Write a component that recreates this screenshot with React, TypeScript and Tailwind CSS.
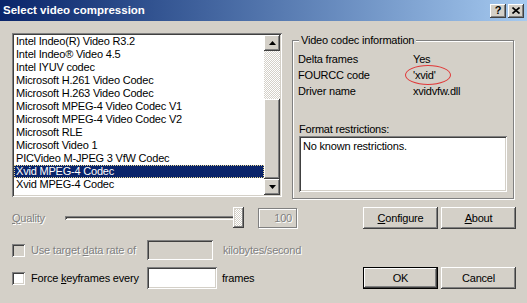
const codecs = [
  "Intel Indeo(R) Video R3.2",
  "Intel Indeo\u00AE Video 4.5",
  "Intel IYUV codec",
  "Microsoft H.261 Video Codec",
  "Microsoft H.263 Video Codec",
  "Microsoft MPEG-4 Video Codec V1",
  "Microsoft MPEG-4 Video Codec V2",
  "Microsoft RLE",
  "Microsoft Video 1",
  "PICVideo M-JPEG 3 VfW Codec",
  "Xvid MPEG-4 Codec",
  "Xvid MPEG-4 Codec",
];
const selected = 10;

const raised =
  "shadow-[inset_-1px_-1px_#404040,inset_1px_1px_#fff,inset_-2px_-2px_#808080,inset_2px_2px_#d4d0c8]";
const sunken =
  "shadow-[inset_1px_1px_#808080,inset_-1px_-1px_#fff,inset_2px_2px_#404040,inset_-2px_-2px_#d4d0c8]";
const dither =
  "bg-[repeating-conic-gradient(#fff_0%_25%,#d4d0c8_0%_50%)] bg-[length:2px_2px]";
const disabledText = "text-[#808080] [text-shadow:1px_1px_0_#fff]";

const Arrow = ({ down }: { down?: boolean }) => (
  <svg width="7" height="4" viewBox="0 0 7 4">
    <polygon points={down ? "0,0 7,0 3.5,4" : "3.5,0 7,4 0,4"} fill="#000" />
  </svg>
);

const Button = ({ children, primary }: { children: React.ReactNode; primary?: boolean }) => (
  <button
    className={`w-[75px] h-[22px] flex items-center justify-center bg-[#d4d0c8] ${
      primary ? "border border-black" : ""
    } ${raised}`}
  >
    {children}
  </button>
);

const CheckBox = ({ disabled }: { disabled?: boolean }) => (
  <div className={`w-[13px] h-[13px] shrink-0 ${disabled ? "bg-[#d4d0c8]" : "bg-white"} ${sunken}`} />
);

export default function App() {
  return (
    <div className="w-[527px] h-[303px] bg-[#d4d0c8] overflow-hidden font-['Liberation_Sans',Arial,sans-serif] text-[11px] leading-[13px] text-black tracking-[-0.2px]">
      {/* title bar */}
      <div className="h-[21px] flex items-center bg-linear-to-r from-[#0a246a] to-[#a6caf0] pl-[3px] pr-[3px]">
        <span className="text-white font-bold text-[11.5px] tracking-normal">Select video compression</span>
        <div className="ml-auto flex gap-[2px]">
          <div className={`w-[16px] h-[14px] bg-[#d4d0c8] flex items-center justify-center font-bold text-[11px] leading-none ${raised}`}>
            ?
          </div>
          <div className={`w-[16px] h-[14px] bg-[#d4d0c8] flex items-center justify-center ${raised}`}>
            <svg width="8" height="7" viewBox="0 0 8 7">
              <path d="M0.5 0.5 L7.5 6.5 M7.5 0.5 L0.5 6.5" stroke="#000" strokeWidth="1.6" />
            </svg>
          </div>
        </div>
      </div>

      {/* list + codec info */}
      <div className="flex items-start pt-[12px] pl-[12px]">
        <div className={`w-[270px] h-[164px] p-[2px] bg-white flex ${sunken}`}>
          <div className="flex-1 flex flex-col">
            {codecs.map((c, i) => (
              <div
                key={i}
                className={`h-[13px] pl-[2px] whitespace-nowrap ${
                  i === selected
                    ? "bg-[#0a246a] text-white outline outline-1 outline-dotted outline-[#e8d890] -outline-offset-1"
                    : ""
                }`}
              >
                {c}
              </div>
            ))}
          </div>
          <div className="w-[16px] flex flex-col">
            <div className={`h-[16px] bg-[#d4d0c8] flex items-center justify-center ${raised}`}>
              <Arrow />
            </div>
            <div className={`h-[48px] ${dither}`} />
            <div className={`flex-1 bg-[#d4d0c8] ${raised}`} />
            <div className={`h-[16px] bg-[#d4d0c8] flex items-center justify-center ${raised}`}>
              <Arrow down />
            </div>
          </div>
        </div>

        <fieldset className="ml-[10px] mt-[1px] w-[222px] h-[165px] border border-[#808080] shadow-[inset_1px_1px_#fff,1px_1px_#fff] px-[5px]">
          <legend className="ml-[1px] px-[2px] bg-[#d4d0c8]">Video codec information</legend>
          <div className="pt-[4px] grid grid-cols-[115px_1fr] leading-[16px]">
            <span>Delta frames</span>
            <span>Yes</span>
            <span>FOURCC code</span>
            <span className="relative">
              'xvid'
              <span className="absolute left-[-8px] top-[-2px] w-[46px] h-[20px] rounded-[50%] border border-[#e03838]" />
            </span>
            <span>Driver name</span>
            <span>xvidvfw.dll</span>
          </div>
          <div className="mt-[24px] pl-[1px]">Format restrictions:</div>
          <div className={`ml-[1px] w-[208px] h-[56px] bg-white p-[2px] pl-[4px] pt-[4px] ${sunken}`}>
            No known restrictions.
          </div>
        </fieldset>
      </div>

      {/* quality row */}
      <div className="mt-[8px] h-[22px] flex items-center pl-[12px] pr-[11px]">
        <span className={`w-[50px] ${disabledText}`}>
          <u>Q</u>uality
        </span>
        <div className="relative w-[186px] h-[22px] flex items-center">
          <div className={`ml-[3px] mr-[5px] flex-1 h-[4px] ${sunken}`} />
          <div className={`absolute left-[171px] top-0 w-[11px] h-[21px] p-[2px] bg-[#d4d0c8] ${raised}`}>
            <div className={`w-full h-full ${dither}`} />
          </div>
        </div>
        <div className="ml-[10px] w-[39px] h-[20px] border border-[#808080] shadow-[inset_1px_1px_#fff,1px_1px_#fff] flex items-center justify-end pr-[4px]">
          <span className={disabledText}>100</span>
        </div>
        <div className="ml-auto flex gap-[3px]">
          <Button>
            <span>
              <u>C</u>onfigure
            </span>
          </Button>
          <Button>
            <span>
              <u>A</u>bout
            </span>
          </Button>
        </div>
      </div>

      {/* data rate row */}
      <div className="mt-[11px] h-[20px] flex items-center pl-[12px]">
        <CheckBox disabled />
        <span className={`ml-[6px] w-[116px] ${disabledText}`}>
          Use target <u>d</u>ata rate of
        </span>
        <div className={`w-[66px] h-[20px] bg-[#d4d0c8] ${sunken}`} />
        <span className={`ml-[10px] ${disabledText}`}>kilobytes/second</span>
      </div>

      {/* keyframes row */}
      <div className="mt-[7px] h-[22px] flex items-center pl-[12px] pr-[11px]">
        <CheckBox />
        <span className="ml-[6px] w-[116px]">
          Force <u>k</u>eyframes every
        </span>
        <div className={`w-[70px] h-[22px] bg-white ${sunken}`} />
        <span className="ml-[5px]">frames</span>
        <div className="ml-auto flex gap-[3px]">
          <Button primary>OK</Button>
          <Button>Cancel</Button>
        </div>
      </div>
    </div>
  );
}
